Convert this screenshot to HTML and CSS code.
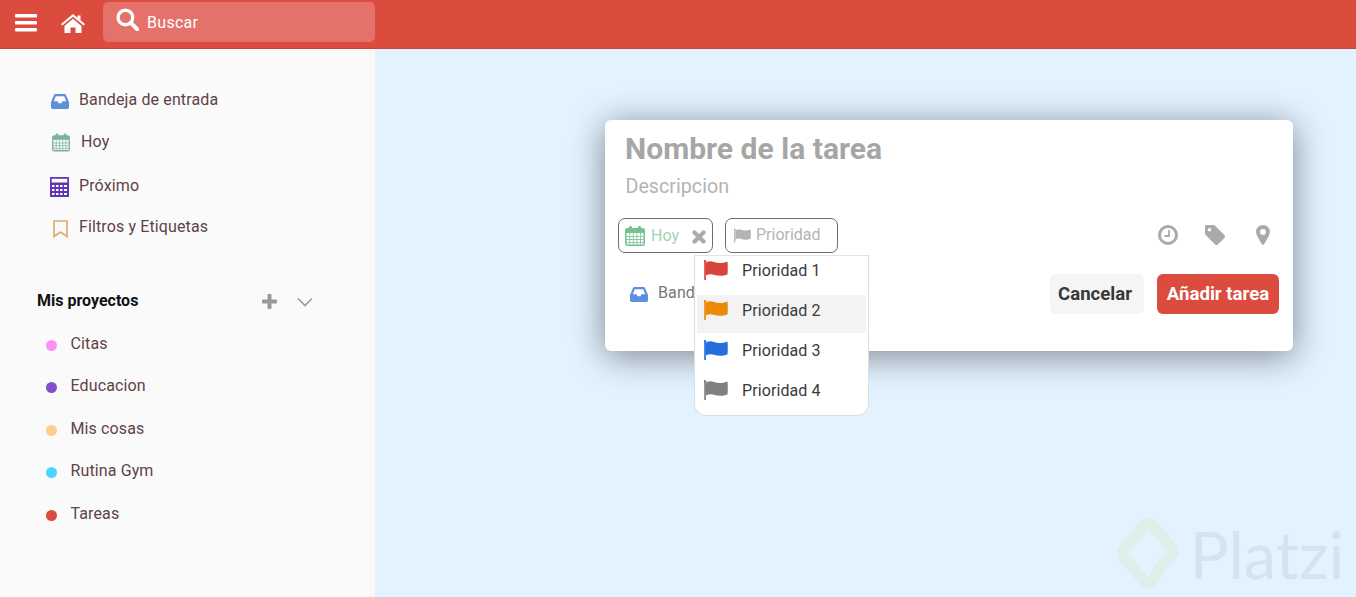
FILE: index.html
```html
<!DOCTYPE html>
<html lang="es">
<head>
<meta charset="utf-8">
<title>Tareas</title>
<link rel="stylesheet" href="styles.css">
</head>
<body>
<svg class="defs" width="0" height="0" aria-hidden="true">
  <symbol id="inbox" viewBox="0 0 18 15"><path d="M4.2 0h9.600c.5 0 .9.3 1.100.7L18 8v5.300c0 1-.8 1.700-1.700 1.700H1.700C.8 15 0 14.300 0 13.300V8L3.100.7C3.300.3 3.700 0 4.200 0zM4.800 2.300 2.800 7.300h3.700l1 2h3l1-2h3.700l-2-5z" fill-rule="evenodd"/></symbol>
  <symbol id="cal" viewBox="0 0 20 20"><rect x="4" y="0" width="3" height="4.500" rx="1"/><rect x="13" y="0" width="3" height="4.500" rx="1"/><rect x=".8" y="2.800" width="18.400" height="16.400" rx="1.500" fill="none" stroke="currentColor" stroke-width="1.500"/><path d="M.8 2.800h18.400V7H.8z"/><path d="M1 10.500h18M1 13.500h18M1 16.500h18M4.700 7v12M8.300 7v12M11.900 7v12M15.500 7v12" stroke="currentColor" stroke-width=".8" fill="none"/></symbol>
  <symbol id="flag" viewBox="0 0 24 20"><circle cx="1" cy="1.300" r="1.300"/><rect x=".2" y="1" width="1.700" height="19"/><path d="M2 2.500c3-1.300 5-1.500 8-.5 4 1.400 8 1.500 13.500-.5 .4 4.500.4 8.500 0 13-5 1.800-9.500 1.700-13.500.3-3-1-5-.8-8 .4z"/></symbol>
</svg>

<header class="topbar">
  <svg class="ic-bars" viewBox="0 0 22 18" fill="#fff"><rect width="22" height="3.600" y="0" rx="1"/><rect width="22" height="3.600" y="7" rx="1"/><rect width="22" height="3.600" y="14" rx="1"/></svg>
  <svg class="ic-home" viewBox="0 0 24 19" fill="#fff"><path d="M12 0 16.500 3.700V1.500h3v4.700L24 10l-1.300 1.500L12 2.700 1.300 11.500 0 10z"/><path d="M12 4.800 20.500 12v7h-6v-5.500h-5V19h-6v-7z"/></svg>
  <div class="search">
    <svg class="ic-search" viewBox="0 0 22 22" fill="none" stroke="#fff"><circle cx="9" cy="9" r="7" stroke-width="3.200"/><path d="M14 14l6.300 6.300" stroke-width="3.800" stroke-linecap="round"/></svg>
    <span>Buscar</span>
  </div>
</header>

<div class="layout">
  <aside class="sidebar">
    <nav class="nav">
      <a class="nav-item r1"><svg class="ic-nav inbox"><use href="#inbox"/></svg>Bandeja de entrada</a>
      <a class="nav-item r2"><svg class="ic-nav today"><use href="#cal"/></svg>Hoy</a>
      <a class="nav-item r3">
        <svg class="ic-nav next" viewBox="0 0 19 20"><path fill-rule="evenodd" d="M1 0h17c.6 0 1 .4 1 1v18c0 .6-.4 1-1 1H1c-.6 0-1-.4-1-1V1c0-.6.4-1 1-1zM1.700 1.800v3.700h15.600V1.800zM2 8v2h2.500V8zm4 0v2h2.500V8zm4 0v2h2.500V8zm4 0v2h3V8zM2 12v2h2.500v-2zm4 0v2h2.500v-2zm4 0v2h2.500v-2zm4 0v2h3v-2zM2 16v2h2.500v-2zm4 0v2h2.500v-2zm4 0v2h2.500v-2zm4 0v2h3v-2z"/></svg>Próximo</a>
      <a class="nav-item r4"><svg class="ic-nav tag" viewBox="0 0 15 18" fill="none"><path d="M1 1h13v15.500L7.500 12 1 16.500z" stroke-width="1.700"/></svg>Filtros y Etiquetas</a>
    </nav>

    <section class="projects">
      <div class="projects-head">
        <strong>Mis proyectos</strong>
        <svg class="ic-plus" viewBox="0 0 15 15" fill="#999"><rect x="5.500" width="4" height="15" rx="1"/><rect y="5.500" width="15" height="4" rx="1"/></svg>
        <svg class="ic-chev" viewBox="0 0 16 10" fill="none" stroke="#999" stroke-width="1.600"><path d="M1 1.500l7 7 7-7"/></svg>
      </div>
      <ul class="project-list">
        <li><i class="dot pink"></i>Citas</li>
        <li><i class="dot violet"></i>Educacion</li>
        <li><i class="dot peach"></i>Mis cosas</li>
        <li><i class="dot sky"></i>Rutina Gym</li>
        <li><i class="dot red"></i>Tareas</li>
      </ul>
    </section>
  </aside>

  <main class="main">
    <div class="modal">
      <div class="title">Nombre de la tarea</div>
      <div class="desc">Descripcion</div>
      <div class="chips">
        <div class="chip chip-today">
          <svg class="ic-chipcal"><use href="#cal"/></svg>
          <span>Hoy</span>
          <svg class="ic-x" viewBox="0 0 14 14" fill="none" stroke="#aaa" stroke-width="4.200" stroke-linecap="round"><path d="M2.500 2.500l9 9M11.500 2.500l-9 9"/></svg>
        </div>
        <div class="chip chip-prio">
          <svg class="ic-chipflag"><use href="#flag"/></svg>
          <span>Prioridad</span>
        </div>
        <div class="tools">
          <svg class="ic-tool" viewBox="0 0 20 20" fill="none" stroke="#aaa"><circle cx="10" cy="10" r="8.500" stroke-width="3"/><path d="M11 5v6H6.500" stroke-width="1.800"/></svg>
          <svg class="ic-tool" viewBox="0 0 20 20" fill="#aaa"><path fill-rule="evenodd" d="M1.500 0h7c.5 0 1 .2 1.400.6l9.500 9.500c.8.800.8 2 0 2.800l-6.500 6.500c-.8.800-2 .8-2.800 0L.6 9.900C.2 9.500 0 9 0 8.500v-7C0 .7.700 0 1.500 0zM4.500 3a1.800 1.800 0 1 0 0 3.600 1.800 1.800 0 0 0 0-3.600z"/></svg>
          <svg class="ic-tool pin" viewBox="0 0 20 20" fill="#aaa"><path fill-rule="evenodd" d="M10 0c3.900 0 7 3 7 6.800 0 3-4.500 10.200-6.200 12.800-.4.500-1.200.5-1.600 0C7.500 17 3 9.800 3 6.800 3 3 6.100 0 10 0zm0 4a2.900 2.900 0 1 0 0 5.800A2.900 2.900 0 0 0 10 4z"/></svg>
        </div>
      </div>
      <div class="footer">
        <div class="where"><svg class="ic-where"><use href="#inbox"/></svg>Bandeja de entrada</div>
        <button class="btn btn-cancel">Cancelar</button>
        <button class="btn btn-add">Añadir tarea</button>
      </div>
      <ul class="menu">
        <li class="menu-first"><svg class="ic-flag f1"><use href="#flag"/></svg>Prioridad 1</li>
        <li class="active"><svg class="ic-flag f2"><use href="#flag"/></svg>Prioridad 2</li>
        <li><svg class="ic-flag f3"><use href="#flag"/></svg>Prioridad 3</li>
        <li><svg class="ic-flag f4"><use href="#flag"/></svg>Prioridad 4</li>
      </ul>
    </div>
    <div class="watermark">
      <svg class="wm-logo" viewBox="0 0 64 76" fill="none" stroke="#deefe9" stroke-width="11" stroke-linejoin="round"><path d="M43 55 36 65a5 5 0 0 1-8 0L8 41a5 5 0 0 1 0-7L28 9a5 5 0 0 1 8 0l20 23a5 5 0 0 1 0 7L41 54"/></svg>
      <span>Platzi</span>
    </div>
  </main>
</div>
</body>
</html>
```

FILE: styles.css
```css
* { box-sizing: border-box; }
html, body { margin: 0; height: 100%; overflow: hidden; }
body { font-family: Roboto, "Liberation Sans", sans-serif; font-size: 16px; color: #5f4248; background: #e2f2ff; }
.defs { position: absolute; }

.topbar { height: 49px; background: #db4c3f; border-bottom: 1px solid #c5473b; display: flex; align-items: flex-start; }
.ic-bars { width: 22px; height: 18px; margin: 14px 0 0 15px; }
.ic-home { width: 24px; height: 19px; margin: 14px 0 0 24px; }
.search { width: 272px; height: 40px; margin: 2px 0 0 18px; background: #e4716a; border-radius: 5px; display: flex; align-items: center; color: #fff; padding-left: 13px; font-size: 16px; letter-spacing: .3px; }
.ic-search { width: 23px; height: 23px; margin: -5px 8px 0 0; }

.layout { display: flex; height: 548px; }
.sidebar { width: 375px; background: #fafafa; flex: none; }
.nav { padding-top: 29px; }
.nav-item { display: flex; align-items: center; padding-left: 51px; letter-spacing: .12px; }
.r1 { height: 42px; }
.r2 { height: 42px; }
.r3 { height: 46px; }
.r4 { height: 36px; }
.ic-nav { margin-right: 10px; margin-top: 5px; flex: none; }
.inbox { width: 18px; height: 15px; fill: #5c90dd; margin-top: 4px; }
.today { width: 18px; height: 19px; color: #7db39c; fill: #7db39c; margin-right: 11px; margin-left: 1px; margin-top: 3px; }
.next { width: 19px; height: 20px; fill: #6333b5; margin-left: -1px; margin-top: 3px; margin-right: 10px; }
.tag { width: 15px; height: 18px; stroke: #e0aa6c; margin-left: 2px; margin-right: 11px; margin-top: 6px; }

.projects { margin-top: 38px; }
.projects-head { display: flex; align-items: center; height: 36px; padding-left: 37px; }
.projects-head strong { color: #111; font-weight: 700; font-size: 16px; width: 225px; }
.ic-plus { width: 15px; height: 15px; margin-top: 2px; }
.ic-chev { width: 16px; height: 10px; margin: 4px 0 0 20px; }
.project-list { list-style: none; margin: 4px 0 0; padding: 0 0 0 46px; }
.project-list li { display: flex; align-items: center; height: 42.500px; letter-spacing: .12px; }
.dot { width: 11px; height: 11px; border-radius: 50%; margin: 4px 13.500px 0 0; flex: none; }
.pink { background: #ff8ff5; }
.violet { background: #8150c8; }
.peach { background: #ffcd8f; }
.sky { background: #4dd4ff; }
.red { background: #db4c3f; }

.main { flex: 1; padding: 71px 0 0 230px; position: relative; }
.modal { position: relative; width: 688px; height: 231px; background: #fff; border-radius: 6px; box-shadow: 0 5px 35px rgba(0, 0, 0, .45); padding: 12px 14px 0 13px; }
.title { font-size: 30px; font-weight: 700; color: #a6a6a6; line-height: 34px; padding-left: 7px; letter-spacing: .03px; }
.desc { font-size: 19.700px; color: #b4b4b4; line-height: 24px; margin-top: 9px; padding-left: 7.500px; }
.chips { display: flex; align-items: flex-start; margin-top: 19px; }
.chip { height: 35px; border: 1px solid #6e6e6e; border-radius: 7px; display: flex; align-items: center; background: #fff; }
.chip-today { width: 95px; padding-left: 6px; color: #9ed5b0; }
.ic-chipcal { width: 20px; height: 20px; color: #78c08f; fill: #78c08f; margin-right: 6px; }
.ic-x { width: 14px; height: 14px; margin-left: 13px; margin-top: 2px; }
.chip-prio { width: 113px; margin-left: 12px; padding-left: 8px; color: #b4b4b4; }
.chip-prio span { margin-top: -3px; }
.ic-chipflag { width: 17px; height: 15px; fill: #b4b4b4; margin-right: 5px; }
.tools { margin-left: auto; display: flex; gap: 27px; margin-top: 7px; margin-right: 6px; }
.ic-tool { width: 20px; height: 20px; }
.footer { display: flex; align-items: flex-start; margin-top: 21px; color: #777; }
.where { display: flex; align-items: center; margin: 9px auto 0 12px; letter-spacing: .12px; }
.ic-where { width: 18px; height: 15px; fill: #5c90dd; margin: 4px 10px 0 0; }
.btn { height: 40px; border: 0; border-radius: 6px; font: 700 18.600px Roboto, sans-serif; padding: 0; }
.btn-cancel { width: 94px; background: #f5f5f5; color: #383838; padding-right: 4px; }
.btn-add { width: 122px; background: #db4c3f; color: #fff; margin-left: 13px; }

.menu { position: absolute; left: 89px; top: 135px; width: 175px; height: 161px; margin: 0; padding: 0 2px; list-style: none; background: #fff; border-radius: 0 0 12px 12px; border: 1px solid #dedede; border-top-color: #e3e3e3; color: #3a3a3a; }
.menu li { height: 38px; margin-bottom: 2px; display: flex; align-items: center; padding: 0 0 7px 7px; letter-spacing: .1px; }
.menu .menu-first { height: 37px; padding-bottom: 8px; }
.menu .active { background: #f3f3f3; }
.ic-flag { width: 24px; height: 20px; margin: -1px 14px 0 0; flex: none; }
.f1 { fill: #d9443a; }
.f2 { fill: #eb8909; }
.f3 { fill: #246fe0; }
.f4 { fill: #808080; }

.watermark { position: absolute; right: 12px; bottom: 5px; display: flex; align-items: center; color: #d3e3ef; font: 400 65px/76px Lato, sans-serif; gap: 10px; }
.wm-logo { width: 64px; height: 76px; }
.pin { margin-left: 1px; }
```
